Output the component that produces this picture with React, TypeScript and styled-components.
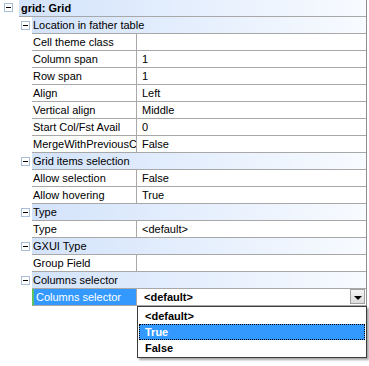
import * as React from 'react';
import styled, { createGlobalStyle } from 'styled-components';

const GlobalStyle = createGlobalStyle`
html, body {
margin: 0;
padding: 0;
background: #ffffff;
}
body {
font-family: "Liberation Sans", Arial, sans-serif;
font-size: 11px;
color: #000000;
}
`;

interface Property {
    name: string;
    value: string;
    selected?: boolean;
}

interface Category {
    title: string;
    items: Property[];
}

const categories: Category[] = [
    {
        title: 'Location in father table',
        items: [
            { name: 'Cell theme class', value: '' },
            { name: 'Column span', value: '1' },
            { name: 'Row span', value: '1' },
            { name: 'Align', value: 'Left' },
            { name: 'Vertical align', value: 'Middle' },
            { name: 'Start Col/Fst Avail', value: '0' },
            { name: 'MergeWithPreviousCell', value: 'False' },
        ],
    },
    {
        title: 'Grid items selection',
        items: [
            { name: 'Allow selection', value: 'False' },
            { name: 'Allow hovering', value: 'True' },
        ],
    },
    {
        title: 'Type',
        items: [{ name: 'Type', value: '<default>' }],
    },
    {
        title: 'GXUI Type',
        items: [{ name: 'Group Field', value: '' }],
    },
    {
        title: 'Columns selector',
        items: [{ name: 'Columns selector', value: '<default>', selected: true }],
    },
];

const options = ['<default>', 'True', 'False'];

export default function App() {
    return <>
        <GlobalStyle />
        <Page>
            <Grid>
                <Row>
                    <RootToggle><Minus /></RootToggle>
                    <Band $bold>grid: Grid</Band>
                </Row>
                {categories.map(cat => (
                    <React.Fragment key={cat.title}>
                        <Row>
                            <CategoryToggle><Minus /></CategoryToggle>
                            <Band>{cat.title}</Band>
                        </Row>
                        {cat.items.map(item => (
                            <Row key={item.name}>
                                <Indent />
                                <NameCell $selected={item.selected}>{item.name}</NameCell>
                                <ValueCell $editing={item.selected}>
                                    {item.value}
                                    {item.selected && <DropButton><Arrow /></DropButton>}
                                </ValueCell>
                            </Row>
                        ))}
                    </React.Fragment>
                ))}
            </Grid>
            <DropList>
                {options.map(o => (
                    <DropItem key={o} $active={o === 'True'}>{o}</DropItem>
                ))}
            </DropList>
        </Page>
    </>;
}

const Page = styled.div`
position: relative;
width: 369px;
height: 366px;
overflow: hidden;
`;

const Grid = styled.div`
width: 366px;
border-right: 1px solid #8c8c8c;
display: flex;
flex-direction: column;
`;

const Row = styled.div`
display: flex;
height: 17px;
`;

const RootToggle = styled.div`
width: 19px;
flex: none;
display: flex;
align-items: flex-start;
padding: 3px 0 0 4px;
box-sizing: border-box;
`;

const CategoryToggle = styled.div`
width: 32px;
flex: none;
display: flex;
align-items: flex-start;
padding: 4px 0 0 21px;
box-sizing: border-box;
`;

const Minus = styled.span`
position: relative;
width: 9px;
height: 9px;
box-sizing: border-box;
border: 1px solid #a9bcd8;
background: #ffffff;

&::after {
content: '';
position: absolute;
left: 1px;
top: 3px;
width: 5px;
height: 1px;
background: #000000;
}
`;

const Band = styled.div<{ $bold?: boolean }>`
flex: 1;
height: 16px;
line-height: 16px;
padding-left: ${p => (p.$bold ? 2 : 1)}px;
border-bottom: 1px solid #a8a8a8;
background: linear-gradient(to right, #d3e3fb, #f8fbff);
font-weight: ${p => (p.$bold ? 'bold' : 'normal')};
white-space: nowrap;
`;

const Indent = styled.div`
width: 32px;
flex: none;
`;

const NameCell = styled.div<{ $selected?: boolean }>`
width: ${p => (p.$selected ? 100 : 103)}px;
flex: none;
height: 16px;
line-height: 16px;
padding-left: ${p => (p.$selected ? 2 : 1)}px;
border-left: ${p => (p.$selected ? '2px solid #5fc35f' : 'none')};
border-right: 1px solid #a8a8a8;
border-bottom: 1px solid #a8a8a8;
background: ${p => (p.$selected ? '#3399ff' : '#ffffff')};
color: ${p => (p.$selected ? '#ffffff' : '#000000')};
overflow: hidden;
white-space: nowrap;
text-overflow: clip;
`;

const ValueCell = styled.div<{ $editing?: boolean }>`
position: relative;
flex: 1;
height: 16px;
line-height: 16px;
padding-left: ${p => (p.$editing ? 7 : 5)}px;
border-bottom: 1px solid #a8a8a8;
font-weight: ${p => (p.$editing ? 'bold' : 'normal')};
white-space: nowrap;
`;

const DropButton = styled.div`
position: absolute;
right: 1px;
top: 0;
width: 15px;
height: 15px;
box-sizing: border-box;
border: 1px solid #a0a0a0;
background: linear-gradient(#f4f4f4, #dcdcdc);
display: flex;
align-items: center;
justify-content: center;
`;

const Arrow = styled.span`
width: 0;
height: 0;
margin-top: 2px;
border-left: 4px solid transparent;
border-right: 4px solid transparent;
border-top: 4px solid #000000;
`;

const DropList = styled.div`
position: absolute;
left: 137px;
top: 306px;
width: 230px;
box-sizing: border-box;
padding: 1px;
border: 1px solid #3c3c3c;
background: #ffffff;
box-shadow: 2px 2px 2px rgba(0, 0, 0, 0.35);
z-index: 10;
`;

const DropItem = styled.div<{ $active?: boolean }>`
height: 16px;
line-height: 14px;
box-sizing: border-box;
padding-left: 5px;
font-weight: bold;
background: ${p => (p.$active ? '#3399ff' : 'transparent')};
color: ${p => (p.$active ? '#ffffff' : '#000000')};
border: 1px dotted ${p => (p.$active ? '#000000' : 'transparent')};
`;
